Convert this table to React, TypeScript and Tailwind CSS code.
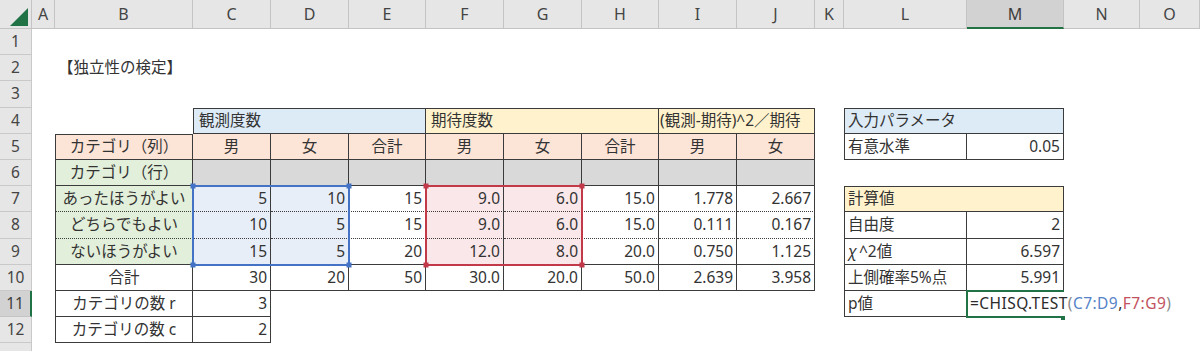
import type { ReactNode } from "react";

type Cell = { t?: ReactNode; c?: string };

const colLetters = ["A", "B", "C", "D", "E", "F", "G", "H", "I", "J", "K", "L", "M", "N", "O"];

const sheetCols =
  "grid-cols-[32px_23px_138px_78px_78px_77px_78px_78px_77px_78px_78px_29px_123px_97px_76px_1fr] grid-rows-[29px_26px_26px_27px_26px_26px_26px_26px_27px_26px_26px_26px_26px_26px]";

const base = "flex min-w-0 items-center whitespace-nowrap px-[3px]";
const left = "justify-start";
const center = "justify-center";
const right = "justify-end";

// borders
const box = "border border-[#3b3b3b]";
const rb = "border-r border-b border-[#3b3b3b]";
const lrb = "border-l border-r border-b border-[#3b3b3b]";
const rDot = "border-r border-[#3b3b3b] [border-bottom:1px_dotted_#3b3b3b]";
const lrDot = "border-l border-r border-[#3b3b3b] [border-bottom:1px_dotted_#3b3b3b]";

const blueHead = "bg-[#ddebf7]";
const yellowHead = "bg-[#fff2cc]";
const salmon = "bg-[#fce4d6]";
const green = "bg-[#e2efda]";
const gray = "bg-[#d9d9d9]";
const blueTint = "bg-[#e8eef8]";
const pinkTint = "bg-[#f9e7e9]";

const E: Cell = {};

const hdr = (t: string): Cell => ({ t, c: `${salmon} ${rb} ${center}` });
const num = (t: string, extra = ""): Cell => ({ t, c: `${rb} ${right} ${extra}` });
const numDot = (t: string, extra = ""): Cell => ({ t, c: `${rDot} ${right} ${extra}` });

const formula = (
  <span className="tracking-[0.45px]">
    =CHISQ.TEST<span className="text-[#8a8a8a]">(</span>
    <span className="text-[#5683c8]">C7:D9</span>,
    <span className="text-[#c2525e]">F7:G9</span>
    <span className="text-[#8a8a8a]">)</span>
  </span>
);

const rows: Cell[][] = [
  // 1
  Array(15).fill(E),
  // 2
  [E, { t: "【独立性の検定】", c: left }, ...Array(13).fill(E)],
  // 3
  Array(15).fill(E),
  // 4
  [
    E,
    E,
    { t: "観測度数", c: `col-span-3 ${blueHead} ${box} ${left} pl-[5px]` },
    { t: "期待度数", c: `col-span-3 ${yellowHead} border-t ${rb} ${left} pl-[5px]` },
    { t: "(観測-期待)^2／期待", c: `col-span-2 ${yellowHead} border-t ${rb} ${left} pl-[1px]` },
    E,
    { t: "入力パラメータ", c: `col-span-2 ${blueHead} ${box} ${left}` },
    E,
    E,
  ],
  // 5
  [
    E,
    { t: "カテゴリ（列）", c: `${salmon} border-t ${lrb} ${center}` },
    hdr("男"),
    hdr("女"),
    hdr("合計"),
    hdr("男"),
    hdr("女"),
    hdr("合計"),
    hdr("男"),
    hdr("女"),
    E,
    { t: "有意水準", c: `${lrb} ${left}` },
    num("0.05"),
    E,
    E,
  ],
  // 6
  [
    E,
    { t: "カテゴリ（行）", c: `${green} ${lrb} ${center}` },
    ...Array(8).fill({ c: `${gray} ${rb}` }),
    ...Array(5).fill(E),
  ],
  // 7
  [
    E,
    { t: "あったほうがよい", c: `${green} ${lrDot} ${center}` },
    numDot("5", blueTint),
    numDot("10", blueTint),
    numDot("15"),
    numDot("9.0", pinkTint),
    numDot("6.0", pinkTint),
    numDot("15.0"),
    numDot("1.778"),
    numDot("2.667"),
    E,
    { t: "計算値", c: `col-span-2 ${yellowHead} ${box} ${left}` },
    E,
    E,
  ],
  // 8
  [
    E,
    { t: "どちらでもよい", c: `${green} ${lrDot} ${center}` },
    numDot("10", blueTint),
    numDot("5", blueTint),
    numDot("15"),
    numDot("9.0", pinkTint),
    numDot("6.0", pinkTint),
    numDot("15.0"),
    numDot("0.111"),
    numDot("0.167"),
    E,
    { t: "自由度", c: `${lrb} ${left}` },
    num("2"),
    E,
    E,
  ],
  // 9
  [
    E,
    { t: "ないほうがよい", c: `${green} ${lrb} ${center}` },
    num("15", blueTint),
    num("5", blueTint),
    num("20"),
    num("12.0", pinkTint),
    num("8.0", pinkTint),
    num("20.0"),
    num("0.750"),
    num("1.125"),
    E,
    {
      t: (
        <span>
          <i className="pr-[2px]">χ</i>^2値
        </span>
      ),
      c: `${lrb} ${left}`,
    },
    num("6.597"),
    E,
    E,
  ],
  // 10
  [
    E,
    { t: "合計", c: `${lrb} ${center}` },
    num("30"),
    num("20"),
    num("50"),
    num("30.0"),
    num("20.0"),
    num("50.0"),
    num("2.639"),
    num("3.958"),
    E,
    { t: "上側確率5%点", c: `${lrb} ${left}` },
    num("5.991"),
    E,
    E,
  ],
  // 11
  [
    E,
    { t: "カテゴリの数 r", c: `${lrb} ${center}` },
    num("3"),
    ...Array(8).fill(E),
    { t: "p値", c: `${lrb} ${left}` },
    { t: formula, c: `relative z-10 ${left} text-[#2b2b2b]` },
    E,
    E,
  ],
  // 12
  [
    E,
    { t: "カテゴリの数 c", c: `${lrb} ${center}` },
    num("2"),
    ...Array(12).fill(E),
  ],
];

// corner handles of a reference range, drawn on the border line
function Handles({ color }: { color: string }) {
  return (
    <svg className="block h-full w-full overflow-visible">
      <rect x="-3.5" y="-3.5" width="5" height="5" fill={color} />
      <svg x="100%" y="0" overflow="visible">
        <rect x="-1.5" y="-3.5" width="5" height="5" fill={color} />
      </svg>
      <svg x="0" y="100%" overflow="visible">
        <rect x="-3.5" y="-1.5" width="5" height="5" fill={color} />
      </svg>
      <svg x="100%" y="100%" overflow="visible">
        <rect x="-1.5" y="-1.5" width="5" height="5" fill={color} />
      </svg>
    </svg>
  );
}

export default function App() {
  return (
    <div className="h-[351px] w-[1200px] overflow-hidden bg-white font-['Noto_Sans','Noto_Sans_CJK_JP',sans-serif] text-[15.5px] text-[#333]">
      <div className={`relative grid ${sheetCols}`}>
        <div className="border-r border-b border-[#c4c4c4] bg-[#e6e6e6]">
          <svg width="31" height="28" viewBox="0 0 31 28" className="block">
            <polygon points="10,26 28,26 28,8" fill="#217346" />
          </svg>
        </div>
        {colLetters.map((l) =>
          l === "M" ? (
            <div
              key={l}
              className="flex items-center justify-center border-r border-b-2 border-r-[#c4c4c4] border-b-[#217346] bg-[#d2d2d2] text-[16px] text-[#3d3d3d]"
            >
              {l}
            </div>
          ) : (
            <div
              key={l}
              className="flex items-center justify-center border-r border-b border-[#c4c4c4] bg-[#e6e6e6] text-[16px] text-[#444]"
            >
              {l}
            </div>
          )
        )}

        {rows.map((row, ri) => [
          ri === 10 ? (
            <div
              key={`h${ri}`}
              className="flex items-center justify-center border-r-2 border-b border-r-[#217346] border-b-[#c4c4c4] bg-[#d2d2d2] text-[15.5px] text-[#3d3d3d]"
            >
              {ri + 1}
            </div>
          ) : (
            <div
              key={`h${ri}`}
              className="flex items-center justify-center border-r border-b border-[#c9c9c9] bg-[#e6e6e6] text-[15.5px] text-[#444]"
            >
              {ri + 1}
            </div>
          ),
          ...row.map((cell, ci) => (
            <div key={`${ri}-${ci}`} className={`${base} ${cell.c ?? ""}`}>
              {cell.t}
            </div>
          )),
        ])}
        <div className="border-r border-[#c9c9c9] bg-[#e6e6e6]" />

        {/* selection layer, same grid laid over the sheet */}
        <div className={`pointer-events-none absolute inset-0 grid ${sheetCols}`}>
          <div className="col-start-4 col-span-2 row-start-8 row-span-3 -m-px border-2 border-[#4472c4]">
            <Handles color="#4472c4" />
          </div>
          <div className="col-start-7 col-span-2 row-start-8 row-span-3 -m-px border-2 border-[#c23a4a]">
            <Handles color="#c23a4a" />
          </div>
          <div className="col-start-14 row-start-12 -my-px -ml-px border-t-2 border-b-2 border-l-2 border-[#217346]">
            <svg className="block h-full w-full overflow-visible">
              <svg x="100%" y="100%" overflow="visible">
                <rect x="-3" y="0" width="4" height="4" fill="#217346" />
              </svg>
            </svg>
          </div>
        </div>
      </div>
    </div>
  );
}
